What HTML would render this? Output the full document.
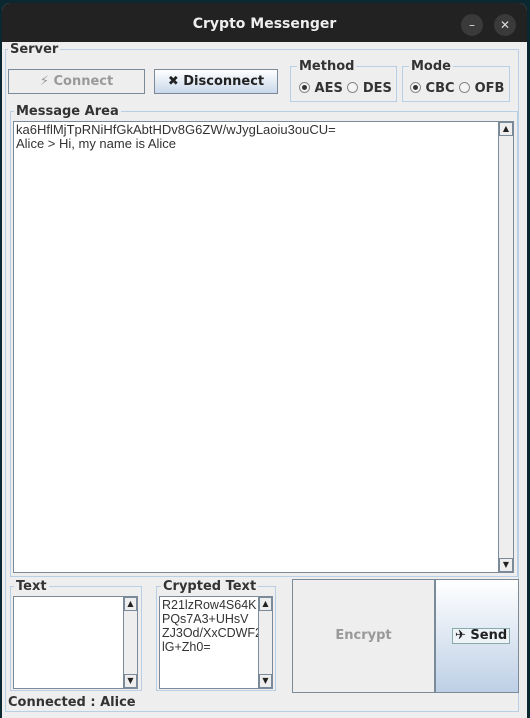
<!DOCTYPE html>
<html><head><style>
*{box-sizing:border-box;margin:0;padding:0}
body{width:530px;height:718px;background:#0b2830;position:relative;overflow:hidden;font-family:"DejaVu Sans","Liberation Sans",sans-serif;font-size:12px;color:#222}
.win{position:absolute;left:2px;top:3px;width:525px;height:715px;background:#eeeeee;border-radius:8px 8px 0 0;overflow:hidden}
.title{position:absolute;left:0;top:0;width:525px;height:39px;background:#222;color:#eee;font-weight:bold;font-size:14px;text-align:center;line-height:42px}
.cb{position:absolute;top:11px;width:22px;height:22px;border-radius:11px;background:#3a3a3a;color:#ddd;font-size:12px;text-align:center;line-height:22px}
.a{position:absolute}
.grp{position:absolute;border:1px solid #b8cfe5}
.lab{position:absolute;background:#eeeeee;font-weight:bold;font-size:13px;padding:0 2px;line-height:14px;color:#333}
.btn{position:absolute;border:1px solid #7a8a99;font-weight:bold;font-size:13px;text-align:center}
.ta{position:absolute;background:#fff;border:1px solid #7a8a99;font-family:"Liberation Sans",sans-serif;font-size:13px;line-height:14px;padding:1px 2px;color:#333;overflow:hidden;white-space:nowrap}
.sb{position:absolute;background:#eee;border-left:1px solid #7a8a99}
.ar{position:absolute;left:0;width:100%;height:14px;border:1px solid #7a8a99;background:#eee;font-size:8px;text-align:center;line-height:12px;color:#222}
.rb{display:inline-block;width:11px;height:11px;border:1px solid #888;border-radius:6px;background:#f4f4f4;vertical-align:-1px;position:relative}
.rb.on::after{content:"";position:absolute;left:2px;top:2px;width:5px;height:5px;border-radius:3px;background:#333}
.rd{position:absolute;font-weight:bold;font-size:13px;color:#333;white-space:nowrap}
</style></head><body>
<div class="win">
<div class="title">Crypto Messenger</div>
<div class="cb" style="left:459px">–</div>
<div class="cb" style="left:492px">✕</div>
</div>
<div class="grp" style="left:5px;top:49px;width:514px;height:663px"></div>
<div class="lab" style="left:8px;top:43px">Server</div>

<div class="btn" style="left:8px;top:69px;width:137px;height:25px;background:#eee;color:#999;line-height:23px">⚡ Connect</div>
<div class="btn" style="left:154px;top:69px;width:124px;height:25px;background:linear-gradient(#fff,#c8d8ea);color:#222;line-height:23px">✖ Disconnect</div>

<div class="grp" style="left:290px;top:66px;width:107px;height:36px"></div>
<div class="lab" style="left:297px;top:60px">Method</div>
<div class="rd" style="left:299px;top:81px"><span class="rb on"></span> AES <span class="rb"></span> DES</div>
<div class="grp" style="left:402px;top:66px;width:108px;height:36px"></div>
<div class="lab" style="left:409px;top:60px">Mode</div>
<div class="rd" style="left:410px;top:81px"><span class="rb on"></span> CBC <span class="rb"></span> OFB</div>

<div class="grp" style="left:10px;top:111px;width:508px;height:466px"></div>
<div class="lab" style="left:14px;top:105px">Message Area</div>
<div class="ta" style="left:13px;top:121px;width:501px;height:452px">ka6HflMjTpRNiHfGkAbtHDv8G6ZW/wJygLaoiu3ouCU=<br>Alice &gt; Hi, my name is Alice</div>
<div class="sb" style="left:498px;top:122px;width:15px;height:450px"><div class="ar" style="top:0">▲</div><div class="ar" style="bottom:0">▼</div></div>

<div class="grp" style="left:10px;top:586px;width:132px;height:105px"></div>
<div class="lab" style="left:14px;top:580px">Text</div>
<div class="ta" style="left:13px;top:596px;width:125px;height:93px"></div>
<div class="sb" style="left:123px;top:597px;width:14px;height:91px"><div class="ar" style="top:0">▲</div><div class="ar" style="bottom:0">▼</div></div>

<div class="grp" style="left:156px;top:586px;width:120px;height:105px"></div>
<div class="lab" style="left:161px;top:580px">Crypted Text</div>
<div class="ta" style="left:159px;top:596px;width:114px;height:93px;font-size:12.5px">R21lzRow4S64K<br>PQs7A3+UHsV<br>ZJ3Od/XxCDWF2<br>lG+Zh0=</div>
<div class="sb" style="left:258px;top:597px;width:14px;height:91px"><div class="ar" style="top:0">▲</div><div class="ar" style="bottom:0">▼</div></div>

<div class="btn" style="left:292px;top:579px;width:143px;height:114px;background:#eee;color:#999;line-height:112px">Encrypt</div>
<div class="btn" style="left:435px;top:579px;width:84px;height:114px;background:linear-gradient(#fff,#bed0e6)"><span style="position:absolute;left:16px;top:48px;border:1px solid #8aa;padding:0 2px;line-height:14px;background:#eef3f8">✈ Send</span></div>

<div class="a" style="left:8px;top:695px;font-weight:bold;font-size:13px;color:#333">Connected : Alice</div>
</body></html>
